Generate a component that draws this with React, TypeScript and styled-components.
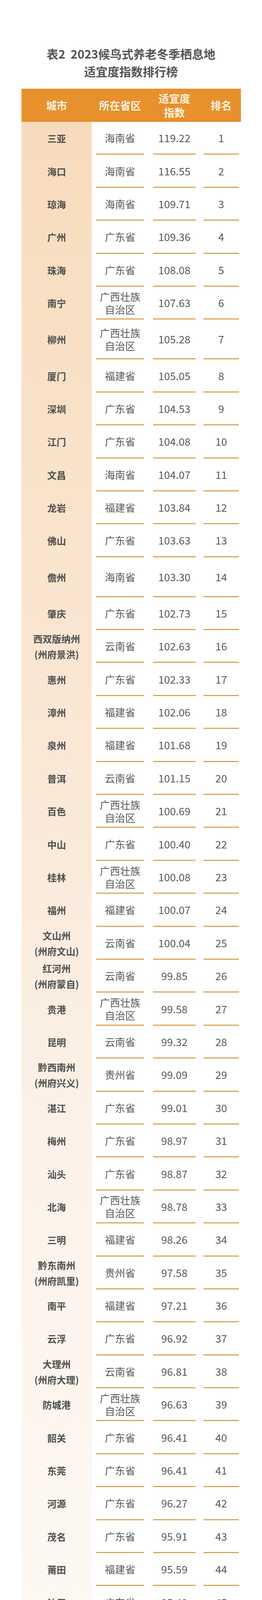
import React from 'react';
import styled, { createGlobalStyle } from 'styled-components';

const GlobalStyle = createGlobalStyle`
  html, body {
    margin: 0;
    padding: 0;
    background: #ffffff;
  }
  body {
    font-family: "Noto Sans CJK SC", "Noto Sans", sans-serif;
  }
  * {
    box-sizing: border-box;
  }
`;

const COLS = '180px 145px 132px 105px';
const ROW_H = 84.4;
const TALL_H = 102;

type Row = {
  city: string[];
  prov: string;
  idx: string;
  rank: number;
  tall?: boolean;
};

const GX = '广西壮族自治区';

const rows: Row[] = [
  { city: ['三亚'], prov: '海南省', idx: '119.22', rank: 1 },
  { city: ['海口'], prov: '海南省', idx: '116.55', rank: 2 },
  { city: ['琼海'], prov: '海南省', idx: '109.71', rank: 3 },
  { city: ['广州'], prov: '广东省', idx: '109.36', rank: 4 },
  { city: ['珠海'], prov: '广东省', idx: '108.08', rank: 5 },
  { city: ['南宁'], prov: GX, idx: '107.63', rank: 6 },
  { city: ['柳州'], prov: GX, idx: '105.28', rank: 7, tall: true },
  { city: ['厦门'], prov: '福建省', idx: '105.05', rank: 8 },
  { city: ['深圳'], prov: '广东省', idx: '104.53', rank: 9 },
  { city: ['江门'], prov: '广东省', idx: '104.08', rank: 10 },
  { city: ['文昌'], prov: '海南省', idx: '104.07', rank: 11 },
  { city: ['龙岩'], prov: '福建省', idx: '103.84', rank: 12 },
  { city: ['佛山'], prov: '广东省', idx: '103.63', rank: 13 },
  { city: ['儋州'], prov: '海南省', idx: '103.30', rank: 14, tall: true },
  { city: ['肇庆'], prov: '广东省', idx: '102.73', rank: 15 },
  { city: ['西双版纳州', '(州府景洪)'], prov: '云南省', idx: '102.63', rank: 16 },
  { city: ['惠州'], prov: '广东省', idx: '102.33', rank: 17 },
  { city: ['漳州'], prov: '福建省', idx: '102.06', rank: 18 },
  { city: ['泉州'], prov: '福建省', idx: '101.68', rank: 19 },
  { city: ['普洱'], prov: '云南省', idx: '101.15', rank: 20 },
  { city: ['百色'], prov: GX, idx: '100.69', rank: 21 },
  { city: ['中山'], prov: '广东省', idx: '100.40', rank: 22 },
  { city: ['桂林'], prov: GX, idx: '100.08', rank: 23 },
  { city: ['福州'], prov: '福建省', idx: '100.07', rank: 24 },
  { city: ['文山州', '(州府文山)'], prov: '云南省', idx: '100.04', rank: 25 },
  { city: ['红河州', '(州府蒙自)'], prov: '云南省', idx: '99.85', rank: 26 },
  { city: ['贵港'], prov: GX, idx: '99.58', rank: 27 },
  { city: ['昆明'], prov: '云南省', idx: '99.32', rank: 28 },
  { city: ['黔西南州', '(州府兴义)'], prov: '贵州省', idx: '99.09', rank: 29 },
  { city: ['湛江'], prov: '广东省', idx: '99.01', rank: 30 },
  { city: ['梅州'], prov: '广东省', idx: '98.97', rank: 31 },
  { city: ['汕头'], prov: '广东省', idx: '98.87', rank: 32 },
  { city: ['北海'], prov: GX, idx: '98.78', rank: 33 },
  { city: ['三明'], prov: '福建省', idx: '98.26', rank: 34 },
  { city: ['黔东南州', '(州府凯里)'], prov: '贵州省', idx: '97.58', rank: 35 },
  { city: ['南平'], prov: '福建省', idx: '97.21', rank: 36 },
  { city: ['云浮'], prov: '广东省', idx: '96.92', rank: 37 },
  { city: ['大理州', '(州府大理)'], prov: '云南省', idx: '96.81', rank: 38 },
  { city: ['防城港'], prov: GX, idx: '96.63', rank: 39 },
  { city: ['韶关'], prov: '广东省', idx: '96.41', rank: 40 },
  { city: ['东莞'], prov: '广东省', idx: '96.41', rank: 41 },
  { city: ['河源'], prov: '广东省', idx: '96.27', rank: 42 },
  { city: ['茂名'], prov: '广东省', idx: '95.91', rank: 43 },
  { city: ['莆田'], prov: '福建省', idx: '95.59', rank: 44 },
  { city: ['汕尾'], prov: '广东省', idx: '95.49', rank: 45 },
  { city: ['阳江'], prov: '广东省', idx: '95.00', rank: 46 },
  { city: ['宁德'], prov: '福建省', idx: '94.92', rank: 47 },
  { city: ['梧州'], prov: GX, idx: '94.57', rank: 48 },
  { city: ['崇左'], prov: GX, idx: '94.01', rank: 49 },
  { city: ['德宏州', '(州府芒市)'], prov: '云南省', idx: '93.91', rank: 50 },
  { city: ['黔南州', '(州府都匀)'], prov: '贵州省', idx: '93.34', rank: 51 },
  { city: ['临沧'], prov: '云南省', idx: '92.29', rank: 52 },
  { city: ['玉林'], prov: GX, idx: '91.43', rank: 53 },
  { city: ['玉溪'], prov: '云南省', idx: '89.85', rank: 54 },
  { city: ['钦州'], prov: GX, idx: '89.52', rank: 55 },
];

const Page = styled.div`
  width: 100%;
  background: #ffffff;
  display: flex;
  flex-direction: column;
  padding: 115px 0 78px;
`;

const Title = styled.h1`
  margin: 0 0 22px;
  text-align: center;
  font-size: 30px;
  line-height: 45px;
  height: 90px;
  font-weight: 700;
  color: #545454;
  white-space: nowrap;
`;

const Table = styled.div`
  margin-left: 55px;
  width: 562px;
  display: flex;
  flex-direction: column;
`;

const HeaderRow = styled.div`
  display: grid;
  grid-template-columns: ${COLS};
  grid-template-rows: 85px;
  height: 85px;
  background: #e8902c;
  color: #fff3e2;
  font-weight: 700;
  font-size: 27px;
  line-height: 36px;
`;

const HeadCell = styled.div<{ $ml: number; $mr: number }>`
  margin: 0 ${(p) => p.$mr}px 0 ${(p) => p.$ml}px;
  display: flex;
  flex-direction: column;
  align-items: center;
  justify-content: center;
  text-align: center;
  white-space: nowrap;
`;

const Body = styled.div`
  display: flex;
  flex-direction: column;
  background-image: linear-gradient(
    180deg,
    #f8dbbd 0%,
    #f9e2c9 18%,
    #fae8d6 36%,
    #fcf2e9 57%,
    #fdf7f1 77%,
    #fefbf8 100%
  );
  background-repeat: no-repeat;
  background-position: left top;
  background-size: 180px calc(100% - ${ROW_H}px);
`;

const BodyRow = styled.div<{ $tall?: boolean }>`
  flex: 0 0 auto;
  display: grid;
  grid-template-columns: ${COLS};
  grid-template-rows: ${(p) => (p.$tall ? TALL_H : ROW_H)}px;
  height: ${(p) => (p.$tall ? TALL_H : ROW_H)}px;
  overflow: hidden;
`;

const CityCell = styled.div`
  min-height: 0;
  display: flex;
  flex-direction: column;
  align-items: center;
  justify-content: center;
  font-weight: 700;
  font-size: 24px;
  line-height: 40px;
  color: #4f4f4f;
  text-align: center;
  white-space: nowrap;
`;

const DataCell = styled.div<{ $ml: number; $mr: number; $num?: boolean }>`
  min-height: 0;
  margin: 0 ${(p) => p.$mr}px 0 ${(p) => p.$ml}px;
  border-bottom: 3px solid #dca55e;
  display: flex;
  flex-direction: column;
  align-items: center;
  justify-content: center;
  color: #5a5a5a;
  font-size: ${(p) => (p.$num ? 27 : 26)}px;
  line-height: 33px;
  text-align: center;
  white-space: nowrap;
`;

const Line = styled.span`
  display: block;
`;

const INSETS = [
  { ml: 11, mr: 11 },
  { ml: 12, mr: 11 },
  { ml: 9, mr: 5 },
];

function splitProv(p: string): string[] {
  if (p.length > 4) return [p.slice(0, 4), p.slice(4)];
  return [p];
}

export default function App() {
  return (
    <>
      <GlobalStyle />
      <Page>
        <Title>
          <Line>表2&nbsp;&nbsp;2023候鸟式养老冬季栖息地</Line>
          <Line>适宜度指数排行榜</Line>
        </Title>
        <Table>
          <HeaderRow>
            <HeadCell $ml={0} $mr={0}>
              <Line>城市</Line>
            </HeadCell>
            <HeadCell $ml={INSETS[0].ml} $mr={INSETS[0].mr}>
              <Line>所在省区</Line>
            </HeadCell>
            <HeadCell $ml={INSETS[1].ml} $mr={INSETS[1].mr}>
              <Line>适宜度</Line>
              <Line>指数</Line>
            </HeadCell>
            <HeadCell $ml={INSETS[2].ml} $mr={INSETS[2].mr}>
              <Line>排名</Line>
            </HeadCell>
          </HeaderRow>
          <Body>
            {rows.map((r) => (
              <BodyRow key={r.rank} $tall={r.tall}>
                <CityCell>
                  {r.city.map((c) => (
                    <Line key={c}>{c}</Line>
                  ))}
                </CityCell>
                <DataCell $ml={INSETS[0].ml} $mr={INSETS[0].mr}>
                  {splitProv(r.prov).map((p) => (
                    <Line key={p}>{p}</Line>
                  ))}
                </DataCell>
                <DataCell $ml={INSETS[1].ml} $mr={INSETS[1].mr} $num>
                  <Line>{r.idx}</Line>
                </DataCell>
                <DataCell $ml={INSETS[2].ml} $mr={INSETS[2].mr} $num>
                  <Line>{r.rank}</Line>
                </DataCell>
              </BodyRow>
            ))}
          </Body>
        </Table>
      </Page>
    </>
  );
}
